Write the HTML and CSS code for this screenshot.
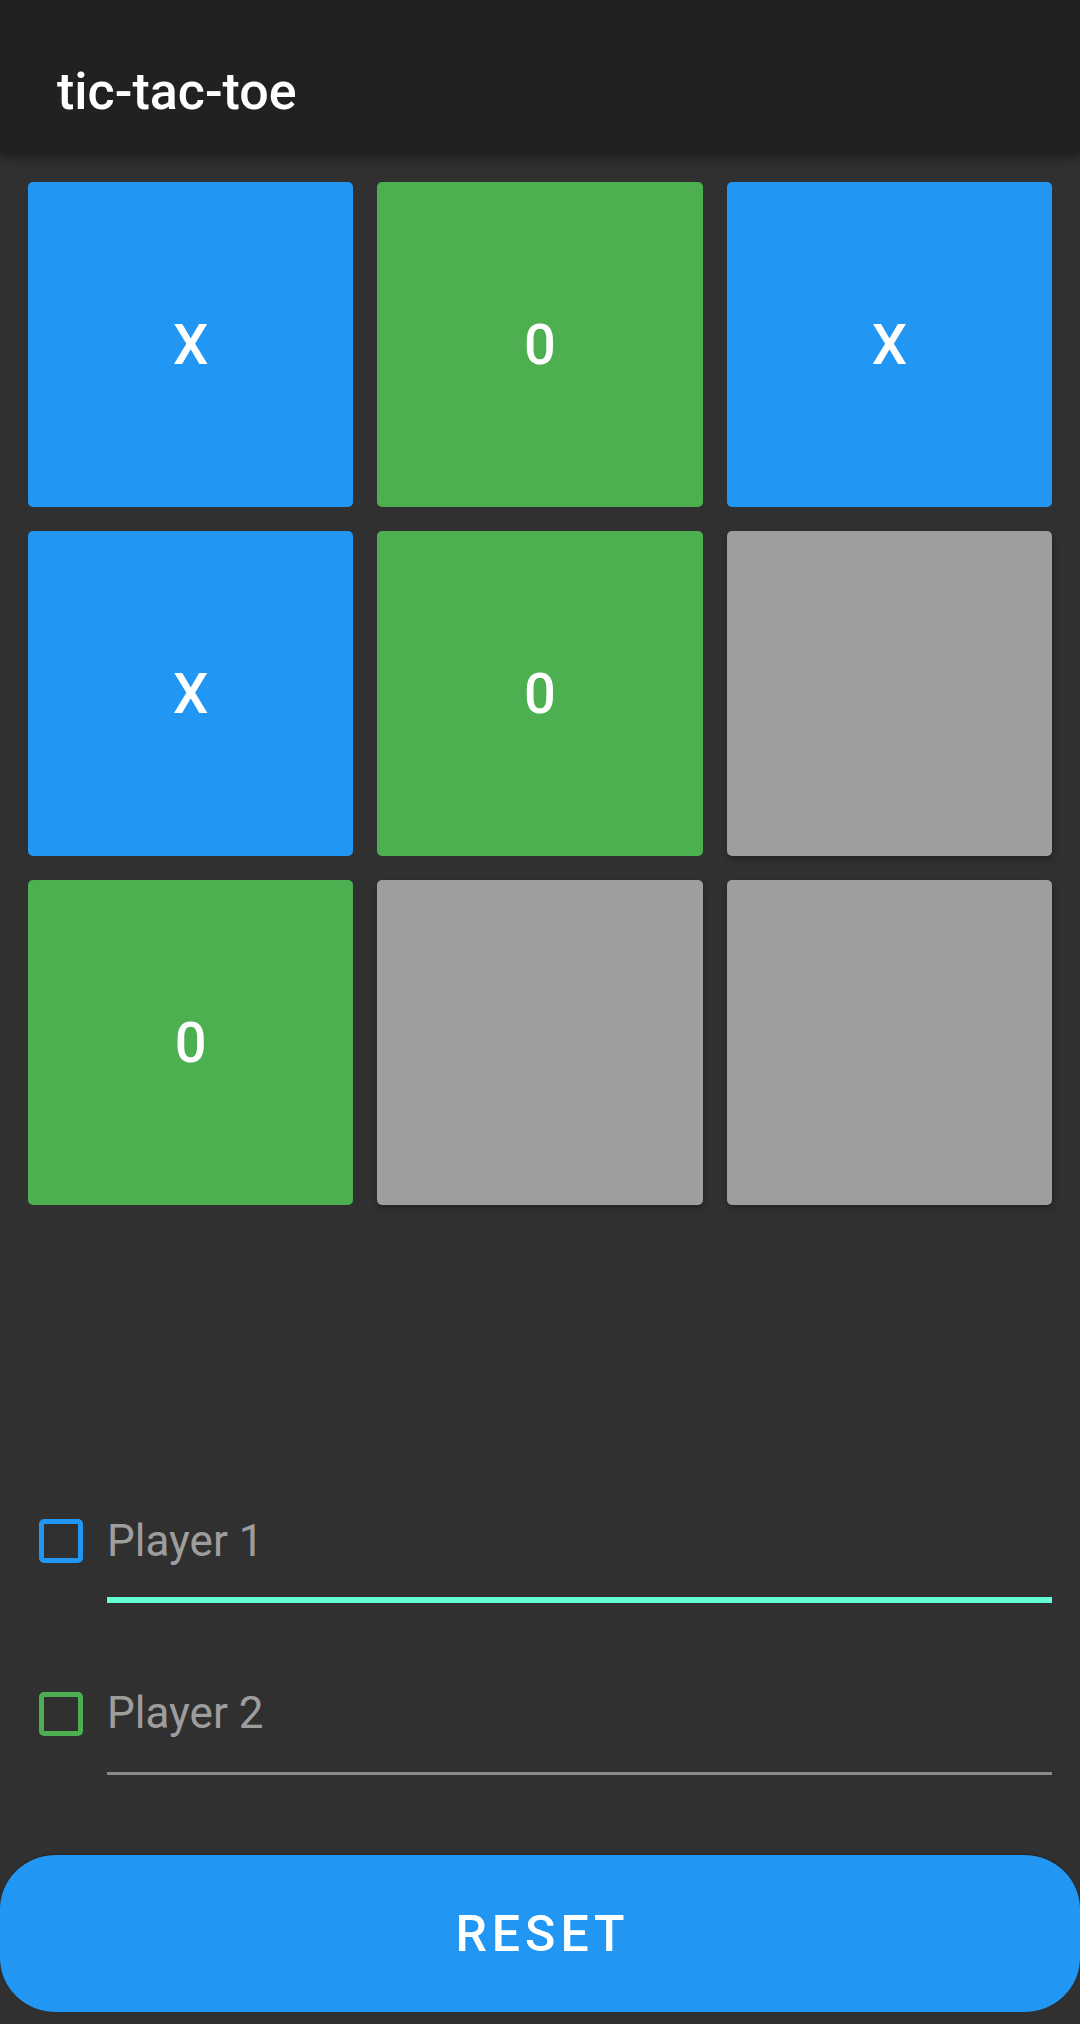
FILE: index.html
```html
<!DOCTYPE html>
<html lang="en">
<head>
<meta charset="utf-8">
<title>tic-tac-toe</title>
<link rel="stylesheet" href="styles.css">
</head>
<body>
  <header class="app-bar">
    <h1 class="title">tic-tac-toe</h1>
  </header>
  <main class="board">
    <div class="cell cell-x">X</div>
    <div class="cell cell-o">0</div>
    <div class="cell cell-x">X</div>
    <div class="cell cell-x">X</div>
    <div class="cell cell-o">0</div>
    <div class="cell cell-empty"></div>
    <div class="cell cell-o">0</div>
    <div class="cell cell-empty"></div>
    <div class="cell cell-empty"></div>
  </main>
  <section class="players">
    <div class="player-row player-one">
      <span class="check check-blue"></span>
      <div class="field field-focused"><span class="hint">Player 1</span></div>
    </div>
    <div class="player-row player-two">
      <span class="check check-green"></span>
      <div class="field"><span class="hint">Player 2</span></div>
    </div>
  </section>
  <button class="reset">RESET</button>
</body>
</html>
```

FILE: styles.css
```css
* { box-sizing: border-box; }

html, body {
  margin: 0;
  padding: 0;
}

body {
  width: 1080px;
  height: 2024px;
  background: #303030;
  font-family: Roboto, "Noto Sans", "Liberation Sans", sans-serif;
  display: flex;
  flex-direction: column;
  overflow: hidden;
}

.app-bar {
  height: 154px;
  background: #212121;
  box-shadow: 0 4px 10px rgba(0, 0, 0, 0.35);
  padding: 60px 0 0 57px;
  position: relative;
  z-index: 1;
  flex: none;
}

.title {
  margin: 0;
  color: #ffffff;
  font-size: 52px;
  font-weight: 500;
  line-height: 64px;
}

.board {
  display: grid;
  grid-template-columns: repeat(3, 1fr);
  gap: 24px;
  padding: 28px 28px 0 28px;
  flex: none;
}

.cell {
  height: 325px;
  border-radius: 5px;
  display: flex;
  align-items: center;
  justify-content: center;
  color: #ffffff;
  font-size: 56px;
  font-weight: 500;
}

.cell-x { background: #2196f3; }
.cell-o { background: #4caf50; }
.cell-empty {
  background: #9e9e9e;
  box-shadow: 1px 3px 6px rgba(0, 0, 0, 0.3);
}

.players {
  margin-top: auto;
  display: flex;
  flex-direction: column;
  gap: 84px;
  flex: none;
}

.player-row {
  display: flex;
  align-items: flex-start;
  padding: 0 28px 0 39px;
  gap: 24px;
}

.check {
  width: 44px;
  height: 44px;
  border-radius: 5px;
  border: 5px solid;
  flex: none;
}

.player-one .check { margin-top: 4px; }
.player-two .check { margin-top: 5px; }

.check-blue { border-color: #2196f3; }
.check-green { border-color: #4caf50; }

.field {
  flex: 1;
  font-size: 44px;
  line-height: 52px;
  color: rgba(255, 255, 255, 0.55);
  padding-bottom: 33px;
  border-bottom: 3px solid #8a8a8a;
}

.field-focused {
  padding-bottom: 30px;
  border-bottom: 6px solid #64ffda;
}

.reset {
  flex: none;
  margin: 80px 0 12px 0;
  width: 1080px;
  height: 157px;
  border: none;
  border-radius: 56px / 54px;
  background: #2196f3;
  color: #ffffff;
  font-family: Roboto, "Noto Sans", "Liberation Sans", sans-serif;
  font-size: 50px;
  font-weight: 500;
  letter-spacing: 5px;
  padding: 0 0 0 5px;
  box-shadow: 0 -1px 2px rgba(0, 0, 0, 0.3);
}
```
